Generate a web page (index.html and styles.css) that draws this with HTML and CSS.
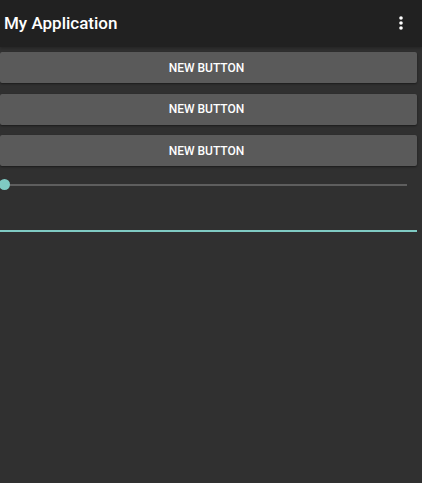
FILE: index.html
```html
<!DOCTYPE html>
<html lang="en">
<head>
    <meta charset="UTF-8">
    <meta name="viewport" content="width=device-width, initial-scale=1.0">
    <title>My Application</title>
    <link rel="stylesheet" href="styles.css">
</head>
<body>
    <!-- App bar -->
    <div class="toolbar">
        <div class="title">My Application</div>
        <div class="menu">
            <svg width="4" height="14" viewBox="0 0 4 14">
                <circle cx="2" cy="2" r="1.8" fill="#fff"/>
                <circle cx="2" cy="7" r="1.8" fill="#fff"/>
                <circle cx="2" cy="12" r="1.8" fill="#fff"/>
            </svg>
        </div>
    </div>

    <!-- Content -->
    <div class="content">
        <button class="btn">NEW BUTTON</button>
        <button class="btn">NEW BUTTON</button>
        <button class="btn">NEW BUTTON</button>

        <div class="slider">
            <div class="track"></div>
            <div class="thumb"></div>
        </div>

        <div class="edit-text"></div>
    </div>
</body>
</html>
```

FILE: styles.css
```css
/* Basic page settings */
body {
    margin: 0;
    padding: 0;
    width: 422px;
    height: 483px;
    background: #303030;
    font-family: Roboto, "Noto Sans", sans-serif;
    overflow: hidden;
}

/* App bar */
.toolbar {
    height: 47px;
    background: #212121;
    display: flex;
    align-items: center;
    justify-content: space-between;
    padding: 0 19px 0 4px;
    box-shadow: 0 1px 3px rgba(0, 0, 0, 0.3);
}

.title {
    color: #fff;
    font-size: 17px;
    font-weight: 500;
    margin-top: -1px;
}

.menu {
    display: flex;
    margin-top: -2px;
}

/* Content column */
.content {
    display: flex;
    flex-direction: column;
    padding-top: 5px;
    width: 417px;
}

.btn {
    height: 31px;
    margin: 0 0 10.5px;
    border: none;
    border-radius: 2px;
    background: #5a5a5a;
    color: #fff;
    font-family: Roboto, "Noto Sans", sans-serif;
    font-size: 12px;
    font-weight: 500;
    box-shadow: 0 1px 2px rgba(0, 0, 0, 0.45);
    padding: 0 4px 0 0;
}

/* Seek bar */
.slider {
    position: relative;
    height: 20px;
    margin-top: -2px;
    display: flex;
    align-items: center;
    padding: 0 10px 0 8px;
}

.track {
    flex: 1;
    height: 2px;
    background: #5e5e5e;
}

.thumb {
    position: absolute;
    left: -1.5px;
    top: 4.5px;
    width: 11px;
    height: 11px;
    border-radius: 50%;
    background: #7fcac3;
}

/* Edit text underline */
.edit-text {
    margin-top: 35px;
    height: 2px;
    background: #7fcac3;
}
```
